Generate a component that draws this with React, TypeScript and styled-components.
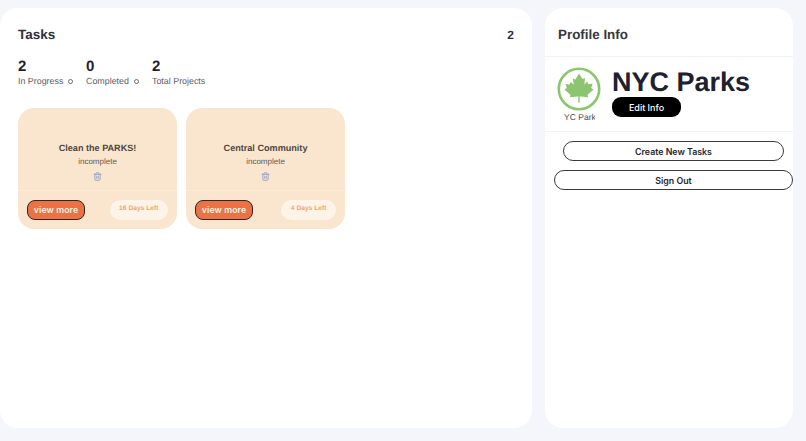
import { Trash2 } from "lucide-react";
import styled, { createGlobalStyle } from "styled-components";

const GlobalStyle = createGlobalStyle`
    html, body {
        margin: 0;
        padding: 0;
        background-color: #f4f6fb;
        font-family: "Liberation Sans", Arial, sans-serif;
        text-rendering: geometricPrecision;
    }
`

const Page = styled.div`
    display: flex;
    gap: 13px;
    width: 806px;
    height: 441px;
    box-sizing: border-box;
    padding: 8px 13px 13px 0;
    overflow: hidden;
`

const Panel = styled.section<{ $width: number }>`
    width: ${p => p.$width}px;
    flex-shrink: 0;
    background-color: #ffffff;
    border-radius: 18px;
    box-sizing: border-box;
`

const TasksPanel = styled(Panel)`
    padding: 18px 18px 0;
`

const TasksHeader = styled.div`
    display: flex;
    justify-content: space-between;
    align-items: center;
    height: 17px;
    color: #2f2f3c;
    font-size: 13.5px;
    font-weight: 700;
`

const TaskTotal = styled.span`
    font-size: 12px;
`

const Stats = styled.div`
    display: flex;
    margin-top: 15px;
`

const Stat = styled.div<{ $width: number }>`
    width: ${p => p.$width}px;
`

const StatNumber = styled.div`
    color: #1f1f2b;
    font-size: 15px;
    font-weight: 700;
    line-height: 17px;
`

const StatLabel = styled.div`
    display: flex;
    align-items: center;
    gap: 5px;
    color: #5d5d66;
    font-size: 8.9px;
    line-height: 12px;
    white-space: nowrap;
`

const Ring = styled.span`
    width: 5px;
    height: 5px;
    box-sizing: border-box;
    border: 1px solid #6b6b75;
    border-radius: 50%;
`

const Cards = styled.div`
    display: flex;
    gap: 9px;
    margin-top: 21px;
`

const Card = styled.article`
    width: 159px;
    height: 121px;
    border-radius: 16px;
    background-color: #fae5cf;
    overflow: hidden;
`

const CardBody = styled.div`
    height: 83px;
    box-sizing: border-box;
    padding-top: 34px;
    border-bottom: 1px solid #fcebd9;
    display: flex;
    flex-direction: column;
    align-items: center;
`

const CardTitle = styled.h3`
    margin: 0;
    color: #4c4742;
    font-size: 9.1px;
    font-weight: 700;
    line-height: 12px;
`

const CardStatus = styled.span`
    margin-top: 2px;
    color: #5f5a55;
    font-size: 8px;
    line-height: 12px;
`

const TrashIcon = styled(Trash2)`
    margin-top: 4px;
    color: #8fa3c9;
`

const CardFooter = styled.div`
    display: flex;
    justify-content: space-between;
    align-items: center;
    padding: 9px 9px 0;
`

const ViewMoreButton = styled.button`
    width: 58px;
    height: 20px;
    padding: 0;
    box-sizing: border-box;
    border: 1.5px solid #33241f;
    border-radius: 8px;
    background-color: #ea7245;
    color: #fdf3ea;
    font-family: "Inter", sans-serif;
    font-size: 8.7px;
    font-weight: 600;
    letter-spacing: 0.1px;
`

const DaysLeft = styled.span`
    height: 20px;
    padding: 4px 9.5px 0;
    box-sizing: border-box;
    border-radius: 10px;
    background-color: #fdf3e8;
    color: #f0a768;
    font-size: 6.7px;
    font-weight: 700;
    line-height: 10px;
`

const ProfileTitle = styled.div`
    height: 49px;
    box-sizing: border-box;
    padding: 18px 0 0 13px;
    border-bottom: 1px solid #f2f3f7;
    color: #38383f;
    font-size: 13.4px;
    font-weight: 700;
    line-height: 17px;
`

const ProfileRow = styled.div`
    display: flex;
    height: 75px;
    box-sizing: border-box;
    padding: 10px 0 0 12px;
    gap: 11px;
    border-bottom: 1px solid #f2f3f7;
`

const LogoBox = styled.div`
    width: 44px;
    display: flex;
    flex-direction: column;
    align-items: center;
`

const LogoCaption = styled.div`
    width: 31px;
    height: 9px;
    margin-top: 2px;
    overflow: hidden;
    display: flex;
    justify-content: center;
    color: #4a4a4a;
    font-size: 8.5px;
    line-height: 9px;
    white-space: nowrap;
`

const ProfileInfo = styled.div`
    display: flex;
    flex-direction: column;
    align-items: flex-start;
`

const ProfileName = styled.h1`
    margin: 0;
    color: #20202f;
    font-size: 27px;
    font-weight: 700;
    line-height: 30px;
`

const EditButton = styled.button`
    width: 69px;
    height: 20px;
    padding: 0;
    border: none;
    border-radius: 9px;
    background-color: #000000;
    color: #ffffff;
    font-family: "Inter", sans-serif;
    font-size: 9px;
    font-weight: 500;
`

const Actions = styled.div`
    display: flex;
    flex-direction: column;
    align-items: center;
    gap: 9px;
    padding: 9px 0 0 9px;
`

const OutlineButton = styled.button<{ $width: number }>`
    width: ${p => p.$width}px;
    height: 20px;
    padding: 0;
    box-sizing: border-box;
    flex-shrink: 0;
    border: 1.5px solid #3a3a3a;
    border-radius: 10px;
    background-color: #ffffff;
    color: #26262c;
    font-family: "Inter", sans-serif;
    font-size: 8.8px;
    font-weight: 600;
`

const tasks = [
    { title: "Clean the PARKS!", days: "16 Days Left" },
    { title: "Central Community", days: "4 Days Left" },
]

const ParksLogo = () => (
    <svg width="44" height="44" viewBox="0 0 44 44">
        <circle cx="22" cy="22" r="20.2" fill="none" stroke="#8cc56f" strokeWidth="2.6" />
        <path
            fill="#8cc56f"
            d="M22 6.5L25.6 12l2.4-1-.6 6.2 3-2.7 1 2.7 4.2-.6-1.4 4.4 2.4 1.4-6 5.4.6 2.4-7.6-.8-1 .1.2 6h-1.6l.2-6-1-.1-7.6.8.6-2.4-6-5.4 2.4-1.4L8.4 17l4.2.6 1-2.7 3 2.7-.6-6.2 2.4 1z"
        />
    </svg>
)

const App = () => {
    return (
        <>
            <GlobalStyle />
            <Page>
                <TasksPanel $width={532}>
                    <TasksHeader>
                        Tasks
                        <TaskTotal>2</TaskTotal>
                    </TasksHeader>
                    <Stats>
                        <Stat $width={68}>
                            <StatNumber>2</StatNumber>
                            <StatLabel>In Progress <Ring /></StatLabel>
                        </Stat>
                        <Stat $width={66}>
                            <StatNumber>0</StatNumber>
                            <StatLabel>Completed <Ring /></StatLabel>
                        </Stat>
                        <Stat $width={80}>
                            <StatNumber>2</StatNumber>
                            <StatLabel>Total Projects</StatLabel>
                        </Stat>
                    </Stats>
                    <Cards>
                        {tasks.map(task => (
                            <Card key={task.title}>
                                <CardBody>
                                    <CardTitle>{task.title}</CardTitle>
                                    <CardStatus>incomplete</CardStatus>
                                    <TrashIcon size={9} strokeWidth={2.5} />
                                </CardBody>
                                <CardFooter>
                                    <ViewMoreButton>view more</ViewMoreButton>
                                    <DaysLeft>{task.days}</DaysLeft>
                                </CardFooter>
                            </Card>
                        ))}
                    </Cards>
                </TasksPanel>
                <Panel $width={248}>
                    <ProfileTitle>Profile Info</ProfileTitle>
                    <ProfileRow>
                        <LogoBox>
                            <ParksLogo />
                            <LogoCaption>NYC Parks</LogoCaption>
                        </LogoBox>
                        <ProfileInfo>
                            <ProfileName>NYC Parks</ProfileName>
                            <EditButton>Edit Info</EditButton>
                        </ProfileInfo>
                    </ProfileRow>
                    <Actions>
                        <OutlineButton $width={221}>Create New Tasks</OutlineButton>
                        <OutlineButton $width={239}>Sign Out</OutlineButton>
                    </Actions>
                </Panel>
            </Page>
        </>
    )
}

export default App
